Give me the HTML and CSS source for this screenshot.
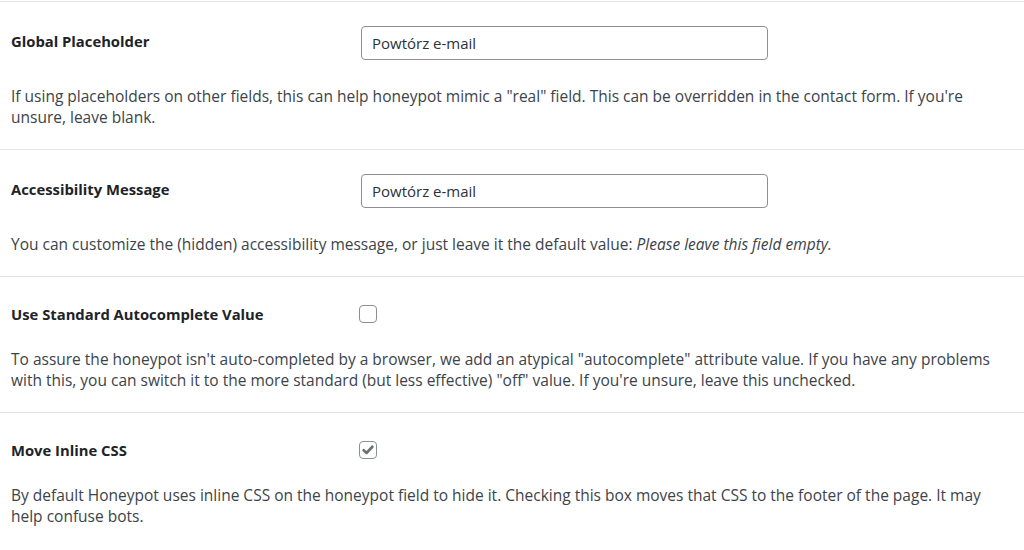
FILE: index.html
```html
<!DOCTYPE html>
<html>
<head>
<meta charset="utf-8">
<link rel="stylesheet" href="styles.css">
</head>
<body>
<div class="settings">
  <div class="row">
    <div class="field-line">
      <div class="label">Global Placeholder</div>
      <div class="text-input">Powtórz e-mail</div>
    </div>
    <p class="desc">If using placeholders on other fields, this can help honeypot mimic a "real" field. This can be overridden in the contact form. If you're unsure, leave blank.</p>
  </div>
  <div class="row">
    <div class="field-line">
      <div class="label">Accessibility Message</div>
      <div class="text-input">Powtórz e-mail</div>
    </div>
    <p class="desc">You can customize the (hidden) accessibility message, or just leave it the default value: <em>Please leave this field empty.</em></p>
  </div>
  <div class="row">
    <div class="field-line check-line">
      <div class="label">Use Standard Autocomplete Value</div>
      <span class="checkbox"></span>
    </div>
    <p class="desc">To assure the honeypot isn't auto-completed by a browser, we add an atypical "autocomplete" attribute value. If you have any problems with this, you can switch it to the more standard (but less effective) "off" value. If you're unsure, leave this unchecked.</p>
  </div>
  <div class="row">
    <div class="field-line check-line">
      <div class="label">Move Inline CSS</div>
      <span class="checkbox checked"><svg viewBox="0 0 16 16" width="14" height="14"><path d="M3 8.3 L6.3 11.4 L13 4.3" fill="none" stroke="#6b7076" stroke-width="3" stroke-linecap="round" stroke-linejoin="round"/></svg></span>
    </div>
    <p class="desc">By default Honeypot uses inline CSS on the honeypot field to hide it. Checking this box moves that CSS to the footer of the page. It may help confuse bots.</p>
  </div>
</div>
</body>
</html>
```

FILE: styles.css
```css
html, body {
  margin: 0;
  padding: 0;
  background: #ffffff;
}
body {
  font-family: "Open Sans", "Noto Sans", "Liberation Sans", sans-serif;
  color: #3c434a;
}
.settings {
  padding-top: 1px;
}
.row {
  border-top: 1px solid #e2e4e7;
  padding: 24px 8px 21px 11px;
}
.field-line {
  display: flex;
  align-items: center;
  min-height: 34px;
}
.check-line {
  min-height: 26px;
}
.label {
  width: 350px;
  flex: none;
  font-size: 14.8px;
  font-weight: 700;
  color: #1d2327;
  line-height: 20px;
  margin-top: -4px;
}
.check-line .label {
  margin-top: 0;
}
.text-input {
  box-sizing: border-box;
  width: 407px;
  height: 34px;
  border: 1px solid #8c8f94;
  border-radius: 4px;
  padding: 0 10px;
  font-size: 15px;
  line-height: 32px;
  color: #2c3338;
}
.checkbox {
  box-sizing: border-box;
  width: 18px;
  height: 18px;
  border: 1px solid #8c8f94;
  border-radius: 4px;
  display: flex;
  align-items: center;
  justify-content: center;
  margin-left: -2px;
}
.desc {
  margin: 26px 0 0;
  font-size: 15.5px;
  line-height: 21px;
}
.check-line + .desc {
  margin-top: 22px;
}
.desc em {
  font-style: italic;
}
```
